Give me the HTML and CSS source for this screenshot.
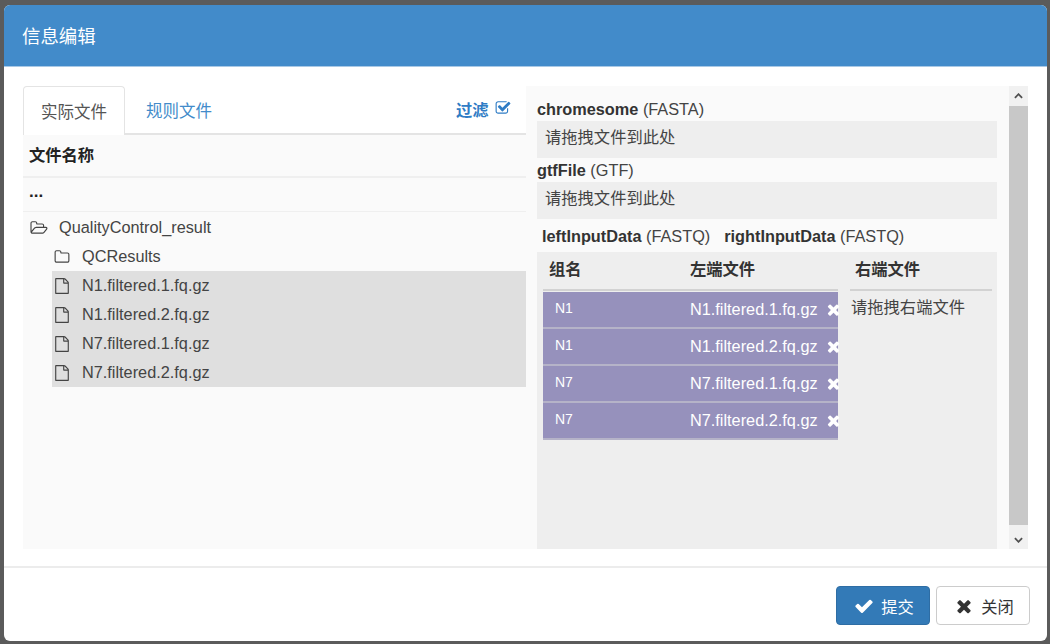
FILE: index.html
```html
<!DOCTYPE html>
<html lang="zh-CN">
<head>
  <meta charset="UTF-8">
  <title>信息编辑</title>
  <link rel="stylesheet" href="styles.css">
</head>
<body>
  <svg class="sprite" xmlns="http://www.w3.org/2000/svg">
    <symbol id="i-check" viewBox="0 0 1792 1792"><path d="M1671 566q0 40-28 68l-724 724-136 136q-28 28-68 28t-68-28l-136-136-362-362q-28-28-28-68t28-68l136-136q28-28 68-28t68 28l294 295 656-657q28-28 68-28t68 28l136 136q28 28 28 68z"/></symbol>
    <symbol id="i-times" viewBox="0 0 1792 1792"><path d="M1490 1322q0 40-28 68l-136 136q-28 28-68 28t-68-28l-294-294-294 294q-28 28-68 28t-68-28l-136-136q-28-28-28-68t28-68l294-294-294-294q-28-28-28-68t28-68l136-136q28-28 68-28t68 28l294 294 294-294q28-28 68-28t68 28l136 136q28 28 28 68t-28 68l-294 294 294 294q28 28 28 68z"/></symbol>
    <symbol id="i-folder" viewBox="0 0 1792 1792"><path d="M1600 1312v-704q0-40-28-68t-68-28h-704q-40 0-68-28t-28-68v-64q0-40-28-68t-68-28h-320q-40 0-68 28t-28 68v960q0 40 28 68t68 28h1216q40 0 68-28t28-68zm128-704v704q0 92-66 158t-158 66h-1216q-92 0-158-66t-66-158v-960q0-92 66-158t158-66h320q92 0 158 66t66 158v32h672q92 0 158 66t66 158z"/></symbol>
    <symbol id="i-folder-open" viewBox="0 0 1920 1792"><path d="M1781 931q0-35-53-35h-1088q-40 0-85.5 21.5t-71.5 52.5l-294 363q-18 24-18 40 0 35 53 35h1088q40 0 86-22t71-53l294-363q18-22 18-39zm-1141-163h768v-160q0-40-28-68t-68-28h-576q-40 0-68-28t-28-68v-64q0-40-28-68t-68-28h-320q-40 0-68 28t-28 68v853l256-315q44-53 116-87.5t140-34.5zm1269 163q0 62-46 120l-295 363q-43 53-116 87.5t-140 34.5h-1088q-92 0-158-66t-66-158v-960q0-92 66-158t158-66h320q92 0 158 66t66 158v32h544q92 0 158 66t66 158v160h192q54 0 99 24.5t67 70.5q15 32 15 68z"/></symbol>
    <symbol id="i-file" viewBox="0 0 1792 1792"><path d="M1596 380q28 28 48 76t20 88v1152q0 40-28 68t-68 28h-1344q-40 0-68-28t-28-68v-1600q0-40 28-68t68-28h896q40 0 88 20t76 48zm-444-244v376h376q-10-29-22-41l-313-313q-12-12-41-22zm384 1528v-1024h-416q-40 0-68-28t-28-68v-416h-768v1536h1280z"/></symbol>
    <symbol id="i-check-square" viewBox="0 0 1792 1792"><path d="M1472 930v318q0 119-84.5 203.5t-203.5 84.5h-832q-119 0-203.5-84.5t-84.5-203.5v-832q0-119 84.5-203.5t203.5-84.5h832q63 0 117 25 15 7 18 23 3 17-9 29l-49 49q-10 10-23 10-3 0-9-2-23-6-45-6h-832q-66 0-113 47t-47 113v832q0 66 47 113t113 47h832q66 0 113-47t47-113v-254q0-13 9-22l64-64q10-10 23-10 6 0 12 3 20 8 20 29zm231-489l-814 814q-24 24-57 24t-57-24l-430-430q-24-24-24-57t24-57l110-110q24-24 57-24t57 24l263 263 647-647q24-24 57-24t57 24l110 110q24 24 24 57t-24 57z"/></symbol>
  </svg>

  <div class="modal">
    <div class="modal-header">信息编辑</div>

    <div class="modal-body">
      <div class="left-pane">
        <div class="tabs">
          <div class="tab active">实际文件</div>
          <div class="tab">规则文件</div>
          <div class="filter">过滤 <svg class="icon-filter"><use href="#i-check-square"/></svg></div>
        </div>
        <div class="file-head">文件名称</div>
        <div class="file-up">...</div>
        <div class="tree">
          <div class="tree-row"><svg class="icon-open"><use href="#i-folder-open"/></svg>QualityControl_result</div>
          <div class="tree-row sub"><svg class="icon-tree"><use href="#i-folder"/></svg>QCResults</div>
          <div class="tree-row sub selected"><svg class="icon-tree"><use href="#i-file"/></svg>N1.filtered.1.fq.gz</div>
          <div class="tree-row sub selected"><svg class="icon-tree"><use href="#i-file"/></svg>N1.filtered.2.fq.gz</div>
          <div class="tree-row sub selected"><svg class="icon-tree"><use href="#i-file"/></svg>N7.filtered.1.fq.gz</div>
          <div class="tree-row sub selected"><svg class="icon-tree"><use href="#i-file"/></svg>N7.filtered.2.fq.gz</div>
        </div>
      </div>

      <div class="right-pane">
        <div class="right-content">
          <div class="field-label"><b>chromesome</b> (FASTA)</div>
          <div class="drop-box">请拖拽文件到此处</div>
          <div class="field-label"><b>gtfFile</b> (GTF)</div>
          <div class="drop-box">请拖拽文件到此处</div>
          <div class="pair-label">
            <span><b>leftInputData</b> (FASTQ)</span>
            <span><b>rightInputData</b> (FASTQ)</span>
          </div>
          <div class="pair-box">
            <div class="pair-left">
              <div class="pair-head">
                <span class="col-group">组名</span>
                <span>左端文件</span>
              </div>
              <div class="pair-row"><span class="col-group">N1</span><span class="col-file">N1.filtered.1.fq.gz</span><svg class="icon-remove"><use href="#i-times"/></svg></div>
              <div class="pair-row"><span class="col-group">N1</span><span class="col-file">N1.filtered.2.fq.gz</span><svg class="icon-remove"><use href="#i-times"/></svg></div>
              <div class="pair-row"><span class="col-group">N7</span><span class="col-file">N7.filtered.1.fq.gz</span><svg class="icon-remove"><use href="#i-times"/></svg></div>
              <div class="pair-row"><span class="col-group">N7</span><span class="col-file">N7.filtered.2.fq.gz</span><svg class="icon-remove"><use href="#i-times"/></svg></div>
            </div>
            <div class="pair-right">
              <div class="pair-head right-head">右端文件</div>
              <div class="right-drop">请拖拽右端文件</div>
            </div>
          </div>
        </div>
        <div class="scrollbar">
          <div class="scroll-btn"><svg viewBox="0 0 10 6"><path d="M1 5l4-4 4 4"/></svg></div>
          <div class="scroll-thumb"></div>
          <div class="scroll-btn down"><svg viewBox="0 0 10 6"><path d="M1 1l4 4 4-4"/></svg></div>
        </div>
      </div>
    </div>

    <div class="modal-footer">
      <button class="btn btn-primary"><svg><use href="#i-check"/></svg>提交</button>
      <button class="btn btn-default"><svg><use href="#i-times"/></svg>关闭</button>
    </div>
  </div>
</body>
</html>
```

FILE: styles.css
```css
* {
  box-sizing: border-box;
}
html, body {
  height: 100%;
}
body {
  margin: 0;
  padding: 5px 3px 3px 4px;
  background: #5b5b5b;
  font-family: "Liberation Sans", "Noto Sans CJK SC", Arial, sans-serif;
  font-size: 16.3px;
  color: #333;
  overflow: hidden;
}
.sprite {
  display: none;
}
.modal {
  height: 636px;
  background: #fff;
  border-radius: 6px;
  overflow: hidden;
  display: flex;
  flex-direction: column;
}
.modal-header {
  height: 62px;
  padding: 0 18px 2px;
  display: flex;
  align-items: center;
  background: #428bca;
  border-bottom: 1px solid #a9c9e6;
  color: #fff;
  font-size: 18.4px;
}
.modal-body {
  height: 499px;
  padding: 19px 19px 0;
  display: flex;
}

/* left side */
.left-pane {
  width: 503px;
  height: 463px;
  display: flex;
  flex-direction: column;
  background: #fafafa;
}
.tabs {
  height: 49px;
  display: flex;
  align-items: stretch;
  background: #fff;
  border-bottom: 2px solid #e4e4e4;
}
.tab {
  width: 102px;
  padding-top: 12px;
  text-align: center;
  font-size: 16.5px;
  color: #428bca;
  border-radius: 4px 4px 0 0;
}
.tab.active {
  height: 49px;
  color: #555;
  background: #fff;
  border: 1px solid #e4e4e4;
  border-bottom: none;
}
.tab + .tab {
  width: 108px;
}
.filter {
  margin-left: auto;
  padding: 11px 15px 0 0;
  color: #2f7cc5;
  font-weight: bold;
}
.icon-filter {
  width: 16px;
  height: 16px;
  margin-left: 2px;
  fill: #2f7cc5;
}
.file-head {
  height: 43px;
  padding: 0 6px 3px;
  display: flex;
  align-items: center;
  font-weight: bold;
  color: #222;
  border-bottom: 2px solid #efefef;
}
.file-up {
  height: 34px;
  padding: 0 6px 6px;
  display: flex;
  align-items: center;
  font-weight: bold;
  font-size: 17px;
  color: #222;
  border-bottom: 1px solid #efefef;
}
.tree {
  padding-top: 1px;
}
.tree-row {
  height: 29px;
  padding-left: 7px;
  display: flex;
  align-items: center;
  color: #444;
}
.tree-row.sub {
  margin-left: 29px;
  padding-left: 2px;
}
.tree-row.selected {
  background: #dfdfdf;
}
.icon-open {
  width: 18px;
  height: 16px;
  margin-right: 11px;
  fill: #444;
}
.icon-tree {
  width: 16px;
  height: 16px;
  margin-right: 12px;
  fill: #444;
}

/* right side */
.right-pane {
  width: 502px;
  height: 463px;
  padding-left: 11px;
  display: flex;
  background: #fafafa;
}
.right-content {
  width: 460px;
  display: flex;
  flex-direction: column;
}
.field-label {
  height: 35px;
  padding-top: 13px;
  line-height: 20px;
}
.field-label + .drop-box + .field-label {
  height: 24px;
  padding-top: 2px;
}
.field-label b, .pair-label b {
  color: #333;
}
.field-label, .pair-label {
  color: #444;
}
.drop-box {
  height: 37px;
  padding: 0 8px 8px;
  display: flex;
  align-items: center;
  background: #eee;
  color: #444;
}
.pair-label {
  height: 33px;
  padding: 2px 0 0 5px;
  display: flex;
  align-items: center;
  gap: 14px;
}
.pair-box {
  flex: 1;
  padding-left: 6px;
  display: flex;
  background: #eee;
}
.pair-left {
  width: 295px;
}
.pair-head {
  height: 39px;
  padding: 0 6px 5px;
  display: flex;
  align-items: center;
  font-weight: bold;
  color: #333;
  border-bottom: 2px solid #d2d2d2;
}
.col-group {
  width: 141px;
  flex: none;
}
.pair-row {
  height: 37px;
  padding-left: 12px;
  display: flex;
  align-items: center;
  background: #9691bc;
  color: #fff;
  border-bottom: 2px solid #b5b3c8;
}
.pair-head + .pair-row {
  margin-top: 1px;
}
.pair-row .col-group {
  width: 135px;
  padding-bottom: 3px;
  font-size: 14px;
}
.pair-row .col-file {
  width: 135px;
  flex: none;
  white-space: nowrap;
}
.icon-remove {
  width: 17px;
  height: 17px;
  flex: none;
  fill: #fff;
}
.pair-right {
  width: 142px;
  margin-left: 12px;
}
.right-head {
  padding-left: 5px;
}
.right-drop {
  padding: 3px 2px 3px 1px;
  color: #444;
}
.scrollbar {
  width: 19px;
  margin-left: 12px;
  display: flex;
  flex-direction: column;
  background: #f1f1f1;
}
.scroll-btn {
  height: 20px;
  display: flex;
  align-items: center;
  justify-content: center;
}
.scroll-btn.down {
  height: 24px;
  padding-top: 6px;
}
.scroll-btn svg {
  width: 9px;
  height: 6px;
  fill: none;
  stroke: #505050;
  stroke-width: 2;
}
.scroll-thumb {
  flex: 1;
  background: #c8c8c8;
}

/* footer */
.modal-footer {
  flex: 1;
  padding: 18px 17px 0 0;
  display: flex;
  justify-content: flex-end;
  gap: 6px;
  border-top: 2px solid #ececec;
}
.btn {
  height: 39px;
  padding: 0 0 0 2px;
  display: flex;
  align-items: center;
  justify-content: center;
  border-radius: 4px;
  font-family: inherit;
  font-size: 16.3px;
}
.btn svg {
  width: 20px;
  height: 20px;
  margin-right: 7px;
}
.btn-primary {
  width: 94px;
  background: #337ab7;
  border: 1px solid #2e6da4;
  color: #fff;
}
.btn-primary svg {
  fill: #fff;
}
.btn-default {
  width: 94px;
  background: #fff;
  border: 1px solid #ccc;
  color: #333;
}
.btn-default svg {
  fill: #333;
}
```
